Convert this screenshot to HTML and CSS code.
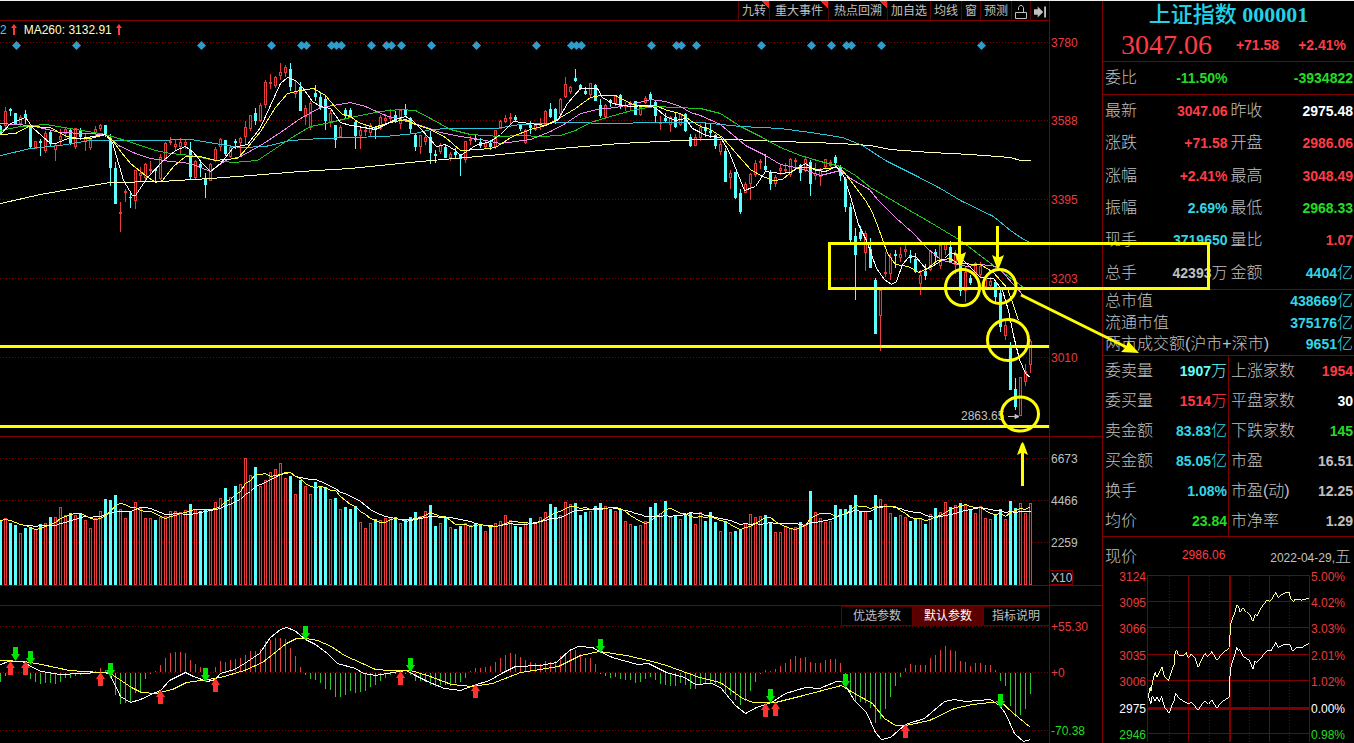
FILE: index.html
```
<!DOCTYPE html>
<html lang="zh-CN">
<head>
<meta charset="UTF-8">
<meta name="viewport" content="width=device-width, initial-scale=1.0">
<title>上证指数 000001</title>
<link rel="stylesheet" href="styles.css">
</head>
<body>

<div class="app">
    <main class="charts">
        <div class="toolbar">
            <button class="tool hot">九转</button>
            <button class="tool hot wide">重大事件</button>
            <button class="tool hot wide">热点回溯</button>
            <button class="tool">加自选</button>
            <button class="tool">均线</button>
            <button class="tool">窗</button>
            <button class="tool">预测</button>
            <button class="tool icon" aria-label="锁定">
                <svg width="12" height="16" viewBox="0 0 12 16"><path d="M3.500 6V3.500L5 1.500H7L8.500 3.500V8M.5 8.500H11.500V14.500H.5Z" fill="none" stroke="#c0c0c0"/></svg>
            </button>
            <button class="tool icon" aria-label="展开">
                <svg width="13" height="12" viewBox="0 0 13 12"><path d="M0 3H4V0L10 6L4 12V9H0Z M11 0H13V12H11Z" fill="#c0c0c0"/></svg>
            </button>
        </div>

        <div class="ma-head">
            <span class="c-cyan">2</span>
            <svg class="up" width="6" height="11" viewBox="0 0 6 11"><path d="M3 0L6 4H4V11H2V4H0Z" fill="#ff3c3c"/></svg>
            <span class="c-pale">MA260: 3132.91</span>
            <svg class="up" width="6" height="11" viewBox="0 0 6 11"><path d="M3 0L6 4H4V11H2V4H0Z" fill="#ff3c3c"/></svg>
        </div>
        <svg id="price" class="chart" viewBox="0 38 1102 399"></svg>
        <svg id="volume" class="chart" viewBox="0 437 1102 168"></svg>

        <div class="tabs">
            <button class="tab">优选参数</button>
            <button class="tab active">默认参数</button>
            <button class="tab last">指标说明</button>
        </div>
        <svg id="macd" class="chart" viewBox="0 626 1102 117"></svg>
    </main>

    <aside class="side">
        <h1><span>上证指数</span> 000001</h1>
        <div class="last-price">
            <span class="big">3047.06</span>
            <span>+71.58</span>
            <span>+2.41%</span>
        </div>

        <table class="quote">
            <tr><th>委比</th><td class="green">-11.50%</td><th></th><td class="green">-3934822</td></tr>
        </table>

        <table class="quote prices">
            <tr><th>最新</th><td class="red">3047.06</td><th>昨收</th><td class="white">2975.48</td></tr>
            <tr><th>涨跌</th><td class="red">+71.58</td><th>开盘</th><td class="red">2986.06</td></tr>
            <tr><th>涨幅</th><td class="red">+2.41%</td><th>最高</th><td class="red">3048.49</td></tr>
            <tr><th>振幅</th><td class="cyan">2.69%</td><th>最低</th><td class="green">2968.33</td></tr>
            <tr><th>现手</th><td class="cyan">3719650</td><th>量比</th><td class="red">1.07</td></tr>
            <tr><th>总手</th><td>42393<i>万</i></td><th>金额</th><td class="cyan">4404<i>亿</i></td></tr>
        </table>

        <table class="quote totals">
            <tr><th>总市值</th><td class="cyan">438669<i>亿</i></td></tr>
            <tr><th>流通市值</th><td class="cyan">375176<i>亿</i></td></tr>
            <tr><th>两市成交额(沪市+深市)</th><td class="cyan">9651<i>亿</i></td></tr>
        </table>

        <table class="quote breadth">
            <tr><th>委卖量</th><td class="aqua">1907<i>万</i></td><th>上涨家数</th><td class="red">1954</td></tr>
            <tr><th>委买量</th><td class="red">1514<i>万</i></td><th>平盘家数</th><td class="white">30</td></tr>
            <tr><th>卖金额</th><td class="cyan">83.83<i>亿</i></td><th>下跌家数</th><td class="green">145</td></tr>
            <tr><th>买金额</th><td class="cyan">85.05<i>亿</i></td><th>市盈</th><td>16.51</td></tr>
            <tr><th>换手</th><td class="cyan">1.08%</td><th>市盈(动)</th><td>12.25</td></tr>
            <tr><th>均价</th><td class="green">23.84</td><th>市净率</th><td>1.29</td></tr>
        </table>

        <div class="now">
            <span class="now-label">现价</span>
            <span class="now-price">2986.06</span>
            <span class="now-date">2022-04-29,<i>五</i></span>
        </div>
        <svg id="intraday" class="chart" viewBox="1103 574 251 169"></svg>
    </aside>

    <!-- hand drawn marks over the charts -->
    <svg class="marks" viewBox="0 0 1354 743">
        <g fill="none" stroke="#ffff00" stroke-width="3">
            <rect x="829.5" y="243.5" width="379" height="45"/>
            <path d="M0 346.500H1049M0 426.500H1049"/>
            <ellipse cx="962.5" cy="287.500" rx="17" ry="18"/>
            <ellipse cx="999.5" cy="286.500" rx="16.500" ry="17"/>
            <circle cx="1008" cy="340" r="20.500"/>
            <ellipse cx="1020" cy="414" rx="18.500" ry="17"/>
            <path d="M959.500 226V256M997.500 226V258M1022.500 486V452M1021 295L1128 348"/>
        </g>
        <path d="M954 252L958 254L962 254L966 252L962 265H959ZM992 255L996 257L1000 257L1004 255L999 268H997ZM1017 455L1021 444L1022.500 442L1024 444L1028 455L1024 453H1021ZM1139 353L1121 352L1126 347L1128 341Z" fill="#ffff00"/>
    </svg>
</div>

<script src="chart.js"></script>
</body>
</html>
```
FILE: styles.css
```
* {
    box-sizing: border-box;
}
body {
    margin: 0;
    background-color: #000;
    color: #c0c0c0;
    font-family: "Liberation Sans", "Noto Sans CJK SC", sans-serif;
    font-size: 12px;
    overflow: hidden;
}
button {
    font-family: inherit;
    font-size: 12px;
    color: #c0c0c0;
    background: none;
    border: none;
    border-radius: 0;
    cursor: pointer;
}
i {
    font-style: normal;
    font-weight: 300;
    font-size: 16px;
}
.app {
    position: relative;
    display: grid;
    grid-template-columns: 1fr 252px;
    border-top: 1px solid #eee;
}
.chart {
    display: block;
    width: 100%;
    height: auto;
    overflow: visible;
}
.chart text {
    font-size: 12px;
}

/* Top buttons */
.toolbar {
    display: flex;
    justify-content: flex-end;
    height: 20px;
    margin-right: 52px;
    border-right: 1px solid #800000;
    border-bottom: 1px solid #800000;
}
.tool {
    display: flex;
    align-items: center;
    justify-content: center;
    padding: 2px 3px 0;
    border-left: 1px solid #600000;
    line-height: 17px;
    white-space: nowrap;
}
.tool.wide {
    padding: 2px 5px 0;
}
.tool.hot {
    background: linear-gradient(225deg, #ff2020 5px, transparent 5px);
}
.tool.icon {
    width: 19px;
}

.ma-head {
    display: flex;
    align-items: center;
    gap: 4px;
    height: 17px;
    margin-right: 52px;
    border-right: 1px solid #800000;
}
.ma-head .up + span {
    margin-left: 3px;
}
.c-cyan {
    color: #33d6e6;
}
.c-pale {
    color: #ffffc8;
}

/* Indicator tabs */
.tabs {
    display: flex;
    justify-content: flex-end;
    height: 21px;
    padding-right: 52px;
    border-top: 1px solid #800000;
}
.tab {
    padding: 0 11px;
    border: 1px solid #600000;
    border-right: none;
    line-height: 18px;
    white-space: nowrap;
}
.tab.active {
    background-color: #5a0000;
    color: #fff;
}
.tab.last {
    padding: 0 9px 0 8px;
    border-right: 1px solid #800000;
}

/* Quote panel */
.side {
    border-left: 1px solid #800000;
}
h1 {
    margin: 0;
    height: 27px;
    color: #22d0e8;
    font-family: "Liberation Serif", "Noto Sans CJK SC", serif;
    font-size: 22px;
    line-height: 27px;
    text-align: center;
    white-space: nowrap;
}
h1 span {
    font-weight: 500;
}
.last-price {
    display: flex;
    align-items: center;
    gap: 19px;
    height: 34px;
    padding: 0 8px 0 18px;
    border-bottom: 1px solid #800000;
    color: #ff3c46;
    font-size: 14px;
    font-weight: bold;
}
.big {
    margin-right: auto;
    font-family: "Liberation Serif", serif;
    font-size: 28px;
    font-weight: normal;
}
.quote {
    width: 100%;
    border-collapse: collapse;
    border-bottom: 1px solid #800000;
    table-layout: fixed;
}
.quote tr {
    height: 32px;
}
.quote th {
    padding: 0 0 0 2px;
    font-size: 16px;
    font-weight: 300;
    line-height: 20px;
    text-align: left;
    white-space: nowrap;
}
.quote td {
    padding: 0 1px 0 0;
    font-size: 14px;
    font-weight: bold;
    line-height: 20px;
    text-align: right;
    white-space: nowrap;
}
.prices {
    height: 195px;
}
.totals tr {
    height: 22px;
}
.totals th {
    width: 70%;
}
.breadth tr {
    height: 30px;
}
.breadth th + td {
    border-right: 1px solid #800000;
}
.breadth td:last-child {
    border-right: none;
}
.red {
    color: #ff3c46;
}
.green {
    color: #22dd22;
}
.cyan {
    color: #33d6e6;
}
.aqua {
    color: #66ffff;
}
.white {
    color: #fff;
}
.now {
    display: flex;
    align-items: center;
    justify-content: space-between;
    height: 36px;
    padding: 0 3px 0 2px;
}
.now-label {
    font-size: 16px;
    font-weight: 300;
}
.now-price {
    color: #ff3c46;
}

.marks {
    position: absolute;
    top: -1px;
    left: 0;
    width: 100%;
    pointer-events: none;
}
```
FILE: chart.js
```
var RED = "#e83c3c";
var CYAN = "#5cffff";
var LINE = "#800000";

// kind, high, body top, body bottom, low
var candles = `
c 125 126 133 134|r 107 111 126 128|c 108 109 111 116|c 113 113 124 125|r 115 117 124 126|c 110 114 118 124|c 125 126 147 149|r 141 141 149 149|c 139 141 143 156|r 131 133 151 153
c 131 132 144 146|r 143 145 150 161|r 129 136 140 145|r 127 129 134 138|c 129 130 143 145|r 128 128 147 149|c 128 130 137 140|r 133 138 142 151|r 137 139 148 150|r 126 129 133 137
r 124 125 129 131|c 125 125 134 137|c 134 138 168 186|c 162 168 204 204|r 202 212 214 232|r 189 191 193 202|c 191 197 198 208|r 170 170 201 209|r 167 173 176 181|r 163 164 178 180
r 161 169 171 174|c 169 169 171 182|r 154 157 179 180|r 142 143 159 161|r 137 141 143 145|r 139 144 147 150|r 138 142 147 154|r 139 142 145 149|c 142 150 177 179|r 160 161 178 180
c 162 164 167 177|c 173 179 185 198|r 163 164 181 181|r 147 149 161 162|r 138 139 147 151|c 140 140 154 156|r 145 147 157 158|c 139 141 143 149|r 137 138 143 155|r 121 127 137 145
r 115 115 129 131|c 108 113 121 125|r 103 105 121 122|r 80 82 105 108|r 74 82 84 89|r 76 77 86 88|r 63 72 76 80|r 65 67 73 77|c 63 69 87 91|r 81 91 94 98
c 82 87 111 111|r 105 108 117 125|r 101 103 128 130|c 85 93 97 101|c 92 97 108 110|c 96 99 121 130|r 110 113 122 127|c 125 125 140 148|r 125 127 137 138|c 108 110 115 118
c 108 110 117 118|c 121 122 136 149|r 127 130 136 149|r 125 130 132 136|r 123 125 133 136|c 126 127 129 139|r 115 117 129 130|r 114 118 121 125|r 109 117 119 122|c 111 115 121 123
r 109 110 124 129|c 104 109 115 117|c 117 118 129 133|c 133 135 147 151|r 135 135 147 154|r 134 137 142 145|c 131 137 153 164|c 150 154 156 163|r 143 145 152 154|c 144 147 158 158
r 152 154 158 161|c 148 152 155 158|c 154 155 159 176|r 141 141 160 163|r 136 139 141 145|c 134 138 140 142|c 138 142 146 148|r 140 143 147 148|c 140 143 147 150|r 130 130 147 149
r 120 121 129 129|r 115 118 122 123|r 113 117 119 124|c 115 117 120 121|c 124 125 129 131|r 129 130 143 144|c 121 125 128 134|r 124 125 130 131|r 118 124 126 130|r 110 111 125 125
c 103 109 117 118|c 108 109 121 124|r 98 99 114 117|r 77 84 97 98|r 86 87 92 94|c 69 78 81 82|c 84 85 89 90|c 87 91 94 95|r 83 83 95 97|c 84 85 101 101
c 99 105 116 118|r 104 105 117 117|c 99 100 103 107|r 95 96 104 106|c 94 95 106 109|r 102 106 107 111|r 101 103 105 110|c 101 101 115 115|r 105 107 115 116|r 96 98 103 104
c 92 94 99 107|c 101 102 116 122|r 116 122 124 130|c 113 118 121 122|r 116 117 125 132|c 113 117 127 128|r 113 114 125 126|c 113 114 131 132|c 134 137 146 147|r 134 137 146 146
r 124 127 138 141|c 122 127 131 137|c 123 131 133 138|c 134 135 146 149|r 141 144 152 155|c 148 151 182 182|r 170 173 178 189|c 172 172 198 199|c 189 193 212 214|r 182 184 193 193
r 173 174 184 200|r 160 163 175 177|r 159 161 163 169|c 154 166 170 172|c 170 172 184 190|r 175 177 184 187|r 165 168 171 175|r 163 169 171 174|r 158 159 175 177|r 158 160 162 168
c 164 165 173 181|r 158 159 171 172|c 160 162 184 196|r 163 173 176 180|r 168 169 177 186|r 159 159 167 168|r 160 162 166 167|c 155 157 163 165|c 165 167 176 181|c 177 179 207 212
c 203 207 240 243|c 228 236 255 300|c 226 232 239 241|r 231 233 253 271|c 238 249 268 268|c 278 280 334 334|r 290 290 316 351|r 252 272 274 277|r 253 257 274 280|c 250 254 256 268
r 247 254 258 262|r 243 249 252 257|c 250 255 258 263|c 253 259 272 273|r 270 275 284 295|c 264 271 276 280|r 250 251 270 271|c 249 252 256 262|r 244 245 266 269|r 242 244 250 255
c 241 247 262 263|r 250 254 265 274|c 258 265 291 296|r 267 272 291 302|c 275 278 283 285|r 262 263 275 277|r 262 266 275 278|r 277 279 287 290|r 277 281 286 288|c 280 282 297 302
c 287 293 327 332|r 319 325 336 340|c 342 346 390 390|c 378 389 407 410|r 377 377 416 416|r 364 371 382 386|r 339 341 365 373
`.trim().split(/[|\n]/).map(function (s) {
    var p = s.split(" ");
    return { up: p[0] === "r", high: +p[1], top: +p[2], bottom: +p[3], low: +p[4] };
});

var volumes = [
    65,67,62,60,52,57,57,56,61,62, 68,68,78,70,72,70,72,65,57,67, 74,86,85,90,76,67,74,83,77,67,
    67,65,68,69,74,74,73,75,81,76, 74,75,76,83,87,97,88,99,101,127, 110,118,99,105,113,116,122,107,109,91,
    105,99,91,103,99,98,86,87,76,78, 76,79,63,57,62,66,65,67,68,68, 62,66,68,73,69,74,80,59,62,68,
    58,56,59,62,60,61,61,54,59,62, 64,70,65,59,58,63,67,63,68,73, 81,78,70,83,81,82,70,73,74,79,
    82,79,76,74,76,64,61,59,60,64, 78,82,72,84,68,69,66,71,73,61, 73,64,73,63,54,64,53,54,56,62,
    71,68,69,70,62,53,53,59,57,58, 63,61,94,73,67,63,64,80,76,76, 80,90,74,74,65,90,86,81,72,68,
    70,68,64,67,67,61,71,77,73,83, 78,80,82,80,76,72,79,67,66,71, 76,66,84,77,82,72,82
];

var hist = [
    -9,-3,0,0,0,0,-6,-9,-11,-10, -10,-11,-9,-5,-5,-3,-2,-1,-1,1, 4,2,-5,-22,-31,-30,-29,-20,-18,-6,
    -1,1,7,14,19,20,20,19,12,8, 5,-2,0,5,11,10,12,13,14,17, 21,21,23,31,32,34,34,33,24,16,
    5,-2,-6,-7,-10,-16,-17,-24,-24,-22, -18,-20,-19,-18,-14,-12,-8,-5,-2,-1, 0,-1,-2,-8,-8,-9,-12,-14,-12,-12,
    -13,-10,-9,-5,1,4,4,5,6,10, 14,17,19,18,15,12,10,9,8,11, 10,11,16,19,21,22,18,14,14,8,
    -1,-3,-5,-4,-6,-7,-7,-10,-9,-6, -4,-7,-11,-12,-13,-13,-10,-12,-16,-16, -12,-11,-10,-11,-12,-20,-22,-27,-32,-28,
    -18,-9,-1,2,1,3,6,9,13,16, 14,15,10,9,9,12,13,13,9,-13, -20,-28,-29,-30,-35,-50,-46,-36,-24,-13,
    -4,4,8,7,7,7,14,17,22,26, 22,21,11,10,6,9,9,7,7,2, -8,-13,-33,-44,-42,-36,-21
];

function rect(x, y, w, h, fill) {
    return '<rect x="' + x + '" y="' + y + '" width="' + w + '" height="' + h + '" fill="' + fill + '"/>';
}
function frame(x, y, w, h, color) {
    if (h < 3) return rect(x, y, w, Math.max(h, 1), color);
    return '<rect x="' + (x + 0.5) + '" y="' + (y + 0.5) + '" width="' + (w - 1) + '" height="' + (h - 1) + '" fill="#200000" stroke="' + color + '"/>';
}
function line(points, color) {
    return '<polyline transform="translate(.5 .5)" fill="none" stroke="' + color + '" points="' + points + '"/>';
}
function dotted(x1, y1, x2, y2) {
    return '<path d="M' + x1 + ' ' + (y1 + 0.5) + 'L' + x2 + ' ' + (y2 + 0.5) + '" stroke="#800000" stroke-dasharray="1 2"/>';
}
function text(x, y, str, color, anchor) {
    return '<text x="' + x + '" y="' + y + '" fill="' + color + '" text-anchor="' + (anchor || "start") + '">' + str + '</text>';
}
function draw(id, shapes, labels) {
    document.getElementById(id).innerHTML = '<g shape-rendering="crispEdges">' + shapes + '</g>' + labels;
}

function drawPrice() {
    var s = rect(1049, 38, 1, 399, LINE) + rect(0, 436, 1102, 1, LINE);
    var t = "";
    [[42, 3780], [120, 3588], [199, 3395], [278, 3203], [357, 3010]].forEach(function (g) {
        s += dotted(0, g[0], 1049, g[0]);
        t += text(1051, g[0] + 5, g[1], RED);
    });
    [16, 76, 201, 271, 301, 306, 331, 336, 341, 371, 386, 391, 401, 431, 476, 536, 571, 576, 581, 651, 676, 681, 696, 761, 811, 831, 846, 851, 881, 981].forEach(function (x) {
        t += '<path d="M' + (x + 0.5) + ' 41l4.500 4.500l-4.500 4.500l-4.500 -4.500z" fill="#2f9ccc"/>';
    });
    candles.forEach(function (c, i) {
        var x = i * 5;
        var color = c.up ? RED : CYAN;
        s += rect(x, c.high, 1, c.low - c.high, color);
        s += c.up ? frame(x - 1, c.top, 3, c.bottom - c.top, color) : rect(x - 1, c.top, 3, c.bottom - c.top, color);
    });
    // MA260, MA120, MA60, MA20, MA10, MA5
    s += line("0,203 40,194 80,187 110,182 160,181 210,178 250,175 300,171 350,168 420,161 500,154 560,148 620,143 660,141 700,139 730,139 780,141 840,143 870,145 890,149 930,152 970,154 1010,157 1020,160 1030,160", "#ffffb0");
    s += line("0,155 30,148 60,145 90,140 115,140 150,140 190,139 220,144 240,147 265,146 290,140 320,138 350,137 385,136 415,133 430,129 450,128 495,128 520,124 560,122 620,123 645,122 700,122 740,126 780,128 810,132 842,137 862,145 885,160 915,175 940,188 960,200 993,216 1010,230 1023,239 1030,242", "#2cc4d8");
    s += line("0,130 20,126 45,124 70,128 105,134 125,140 155,150 170,153 190,155 215,160 233,162 257,160 275,148 290,138 310,126 330,122 350,117 380,111 400,109 415,110 430,118 450,129 470,134 500,136 520,135 540,136 560,135 575,130 590,122 610,116 635,109 655,106 675,107 700,108 720,113 740,126 760,136 780,147 800,155 820,161 840,166 855,175 870,187 892,200 930,222 960,240 993,265 1023,287", "#1ec81e");
    s += line("0,123 30,125 60,132 85,133 105,134 118,145 135,153 150,158 170,161 190,163 200,167 210,171 225,160 240,156 260,145 280,132 300,118 320,107 345,103 350,102 365,106 385,115 400,119 420,125 440,132 460,136 480,139 500,143 515,141 530,139 550,131 565,123 580,113 597,109 615,107 635,103 650,99 665,101 680,106 690,112 700,115 720,124 745,145 765,155 780,164 800,168 820,175 840,170 850,178 869,189 877,199 895,217 913,233 927,248 940,259 953,263 967,266 980,264 997,266 1005,275 1012,283 1023,295", "#f088f0");
    s += line("0,134 15,133 28,126 50,127 62,134 72,138 90,138 105,134 112,140 121,152 130,163 145,175 155,182 162,180 173,166 185,156 200,156 215,160 225,159 237,158 247,147 260,131 275,107 287,93 300,90 313,88 325,95 335,107 342,114 350,116 358,122 373,127 390,122 405,119 415,124 430,129 445,137 460,150 480,149 495,147 512,136 530,129 545,125 560,117 575,108 590,97 600,95 615,95 630,103 640,106 655,105 667,110 680,113 690,120 700,126 710,129 722,137 735,152 750,169 762,176 773,180 782,179 795,168 805,167 818,169 835,167 842,170 850,180 865,200 871,210 877,225 887,253 895,264 908,266 918,272 927,268 937,260 950,258 957,263 980,264 993,272 1007,288 1013,305 1018,320", "#ffff3c");
    s += line("0,134 10,123 25,117 33,128 50,143 55,143 70,137 80,138 105,134 112,142 123,180 132,195 135,195 147,177 163,160 175,150 185,146 193,152 202,163 210,171 220,163 233,147 247,144 260,127 280,83 287,77 295,80 302,87 312,101 320,106 330,108 340,122 350,125 357,126 375,129 395,119 405,116 412,120 420,128 428,137 436,146 445,144 455,150 460,155 475,145 490,141 500,134 513,121 530,123 545,125 557,120 567,103 580,88 597,88 602,97 612,103 630,106 645,105 655,107 665,116 675,120 685,118 692,128 700,132 705,135 720,137 728,150 744,190 755,186 765,171 780,173 790,172 800,166 805,163 815,170 825,171 836,166 843,175 850,196 858,224 866,240 876,268 884,279 891,284 896,281 902,264 908,257 915,256 926,269 935,264 944,258 950,252 958,255 968,265 980,277 993,278 1002,290 1008,310 1013,335 1019,359 1025,373 1030,377", "#ffffff");
    t += text(961, 420, "2863.65", "#c0c0c0");
    t += '<path d="M1008 416.500H1017M1015 414.500L1019 416.500L1015 418.500Z" stroke="#c0c0c0" fill="#c0c0c0"/>';
    draw("price", s, t);
}

function average(list, n) {
    return list.map(function (v, i) {
        var part = list.slice(Math.max(0, i - n + 1), i + 1);
        var sum = part.reduce(function (a, b) { return a + b; }, 0);
        return i * 5 + "," + Math.round(585 - sum / part.length);
    }).join(" ");
}

function drawVolume() {
    var s = rect(1049, 437, 1, 168, LINE) + rect(0, 585, 1102, 1, LINE);
    var t = "";
    [[458, 6673], [500, 4466], [542, 2259]].forEach(function (g) {
        s += dotted(0, g[0], 1049, g[0]);
        t += text(1051, g[0] + 5, g[1], "#c0c0c0");
    });
    volumes.forEach(function (v, i) {
        var x = i * 5 - 1;
        s += candles[i].up ? frame(x, 585 - v, 3, v, RED) : rect(x, 585 - v, 3, v, CYAN);
    });
    s += line(average(volumes, 10), "#ffffff");
    s += line(average(volumes, 5), "#ffff3c");
    s += '<rect x="1049.5" y="570.5" width="23" height="14" fill="none" stroke="#800000"/>';
    t += text(1051, 582, "X10", "#c0c0c0");
    draw("volume", s, t);
}

function drawMacd() {
    var s = rect(1049, 626, 1, 117, LINE) + dotted(0, 626, 1049, 626) + dotted(0, 672, 1049, 672) + dotted(0, 730, 1049, 730);
    var t = text(1051, 631, "+55.30", RED) + text(1051, 677, "+0", RED) + text(1051, 735, "-70.38", "#22dd22");
    hist.forEach(function (v, i) {
        if (v > 0) s += rect(i * 5, 672 - v, 1, v, RED);
        if (v < 0) s += rect(i * 5, 673, 1, -v, "#28c828");
    });
    s += line("0,664 8,661 22,661 34,668 41,671 60,674 80,673 100,672 108,672 110,675 120,696 130,702 140,699 155,692 160,690 169,680 185,672 193,676 207,681 215,679 220,673 234,669 244,663 259,653 270,637 280,629 286,627 294,630 305,639 315,644 327,653 337,663 355,668 363,673 375,675 386,673 406,670 415,675 427,681 444,688 460,690 473,685 489,680 503,672 515,666 540,665 556,662 569,650 578,646 592,647 601,652 612,657 637,664 648,663 666,672 684,677 695,684 711,683 720,687 735,705 745,713 756,707 771,702 785,693 805,687 819,688 836,681 841,681 846,687 854,700 866,712 875,732 881,739 890,737 905,724 924,718 944,701 954,699 965,701 990,699 999,705 1005,713 1014,733 1023,741 1030,739", "#ffffff");
    s += line("0,660 24,661 41,664 69,670 100,672 110,673 119,679 131,687 141,692 155,693 172,689 186,682 207,679 220,677 244,670 262,662 286,643 296,638 305,638 317,640 331,646 344,655 362,663 375,669 389,670 410,670 427,675 451,684 472,686 492,683 520,672 540,669 558,666 580,655 599,651 626,655 652,661 666,665 699,677 720,682 742,698 753,702 775,702 803,695 841,685 854,693 872,703 884,718 895,725 905,725 929,720 954,708 972,704 1000,701 1012,712 1030,727", "#ffff3c");
    [[15, 647], [30, 651], [110, 663], [205, 668], [305, 626], [410, 658], [600, 639], [770, 689], [845, 674], [1000, 694]].forEach(function (p) {
        t += '<path d="M' + (p[0] - 2) + ' ' + p[1] + 'h5v7h2l-4.500 7l-4.500 -7h2z" fill="#00e600"/>';
    });
    [[10, 661], [25, 661], [100, 672], [160, 690], [215, 678], [400, 671], [475, 684], [765, 703], [775, 702], [905, 724]].forEach(function (p) {
        t += '<path d="M' + (p[0] + 0.5) + ' ' + p[1] + 'l4.500 7h-2v7h-5v-7h-2z" fill="#ff3232"/>';
    });
    draw("macd", s, t);
}

function drawIntraday() {
    var s = "", t = "";
    [
        [577, "3124", "5.00%", RED], [603, "3095", "4.02%", RED], [629, "3066", "3.03%", RED], [656, "3035", "2.01%", RED],
        [682, "3006", "1.02%", RED], [709, "2975", "0.00%", "#fff"], [735, "2946", "0.98%", "#22dd22"]
    ].forEach(function (g) {
        s += g[0] === 709 ? rect(1147, 708, 163, 3, LINE) : rect(1147, g[0] - 1, 163, 1, LINE);
        t += text(1146, g[0] + 5, g[1], g[3], "end") + text(1311, g[0] + 5, g[2], g[3]);
    });
    [1147, 1188, 1269, 1309].forEach(function (x) { s += rect(x, 576, 1, 167, LINE); });
    s += rect(1229, 576, 2, 167, LINE);
    [1169, 1209, 1249, 1289].forEach(function (x) { s += dotted(x + 0.5, 576, x + 0.5, 743); });
    // offsets are in thirds of a pixel from 1100,535
    s += '<g transform="translate(1100 535) scale(.33333)" stroke-width="3">';
    s += line("145,485 150,460 152,472 158,438 165,415 170,430 178,415 185,398 193,428 205,440 215,408 222,390 223,362 229,348 235,362 250,365 258,355 265,372 272,360 285,372 294,400 305,375 315,358 322,368 335,352 350,378 365,360 388,340 390,290 393,262 403,240 410,212 415,215 420,235 428,222 440,235 448,240 458,262 465,240 470,245 485,218 500,198 510,202 527,175 535,190 550,177 568,175 570,190 580,203 585,195 605,198 627,192", "#ffffa0");
    s += line("145,485 152,510 156,485 165,500 170,488 178,503 184,487 193,518 207,538 215,515 222,500 226,478 240,495 262,508 275,505 294,528 305,510 315,500 325,510 335,498 350,522 365,503 388,488 390,405 398,380 410,340 414,350 418,345 430,368 448,378 458,405 465,380 470,385 490,362 500,350 512,350 527,325 535,340 550,332 570,332 577,350 590,340 605,340 627,327", "#ffffff");
    s += '</g>';
    draw("intraday", s, t);
}

drawPrice();
drawVolume();
drawMacd();
drawIntraday();
```
